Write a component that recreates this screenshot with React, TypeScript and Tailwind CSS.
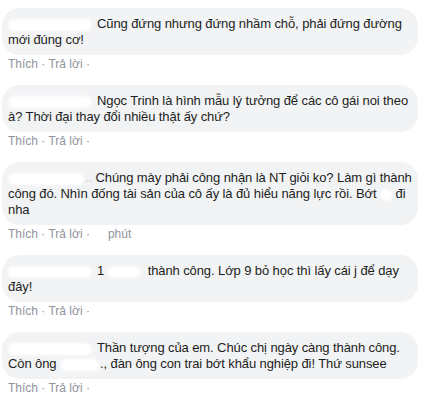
import React from "react";

// blurred-out name / word
const Blur = ({ w, className = "" }: { w: number; className?: string }) => (
  <span
    className={`inline-block h-[12px] align-middle rounded-full bg-white blur-[1.5px] ${className}`}
    style={{ width: w }}
  />
);

interface IComment {
  lines: React.ReactNode[];
  time?: React.ReactNode;
}

const comments: IComment[] = [
  {
    lines: [
      <>
        <Blur w={84} className="mr-[5px]" />
        Cũng đứng nhưng đứng nhầm chỗ, phải đứng đường
      </>,
      <>mới đúng cơ!</>,
    ],
  },
  {
    lines: [
      <>
        <Blur w={84} className="mr-[5px]" />
        Ngọc Trinh là hình mẫu lý tưởng để các cô gái noi theo
      </>,
      <>à? Thời đại thay đổi nhiều thật ấy chứ?</>,
    ],
  },
  {
    lines: [
      <>
        <Blur w={76} className="mr-[1px]" />
        <span className="text-[#c8c9cc]">..</span> Chúng mày phải công nhận là NT giỏi ko? Làm gì thành
      </>,
      <>công đó. Nhìn đống tài sản của cô ấy là đủ hiểu năng lực rồi. Bớt <Blur w={12} /> đi</>,
      <>nha</>,
    ],
    time: (
      <>
        <Blur w={10} className="mx-[4px]" />
        phút
      </>
    ),
  },
  {
    lines: [
      <>
        <Blur w={84} className="mr-[5px]" />1<Blur w={34} className="mx-[3px]" /> thành công. Lớp 9 bỏ học thì lấy cái j để dạy
      </>,
      <>đây!</>,
    ],
  },
  {
    lines: [
      <>
        <Blur w={84} className="mr-[5px]" />
        Thần tượng của em. Chúc chị ngày càng thành công.
      </>,
      <>
        Còn ông <Blur w={38} className="mx-[1px]" />., đàn ông con trai bớt khẩu nghiệp đi! Thứ sunsee
      </>,
    ],
  },
];

const App = () => {
  return (
    <div className="w-[426px] h-[406px] bg-white overflow-hidden pt-[8px] font-['Liberation_Sans',Arial,sans-serif]">
      {comments.map((c, i) => (
        <div key={i} className="mb-[14px]">
          <div className="ml-[2px] mr-[8px] rounded-[18px] bg-[#f2f3f5] pl-[6px] pr-3 pt-[8px] pb-[7px] text-[13px] leading-[16px] tracking-[-0.1px] text-[#1c1e21]">
            {c.lines.map((l, j) => (
              <div key={j} className="whitespace-nowrap">
                {l}
              </div>
            ))}
          </div>
          <div className="pl-[8px] pt-[1px] h-[16px] text-[12px] leading-[16px] text-[#90949c] whitespace-nowrap">
            Thích · Trả lời ·{c.time}
          </div>
        </div>
      ))}
    </div>
  );
};

export default App;
